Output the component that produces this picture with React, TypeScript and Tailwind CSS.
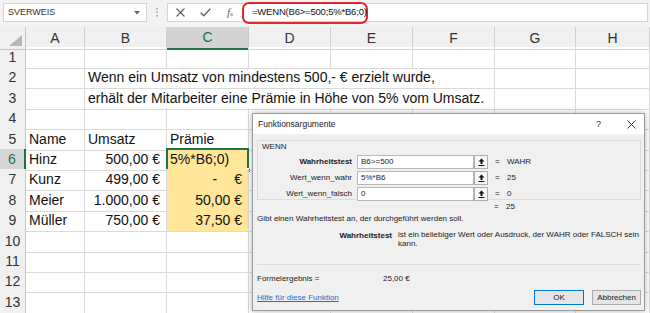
import type { ReactNode } from "react";

type Cell = {
  text?: ReactNode;
  right?: boolean;
  wide?: boolean;
  fill?: boolean;
  fillEnd?: boolean;
  active?: boolean;
};

const GRID = "grid grid-cols-[26px_59px_82px_82px_82px_82px_82px_81px_1fr]";
const LETTERS = ["A", "B", "C", "D", "E", "F", "G", "H"];

const blank = (n: number): Cell[] => Array.from({ length: n }, () => ({}));

const rows: Cell[][] = [
  blank(8),
  [{}, { text: "Wenn ein Umsatz von mindestens 500,- € erzielt wurde,", wide: true }, {}, {}],
  [{}, { text: "erhält der Mitarbeiter eine Prämie in Höhe von 5% vom Umsatz.", wide: true }, {}, {}],
  blank(8),
  [{ text: "Name" }, { text: "Umsatz" }, { text: "Prämie" }, ...blank(5)],
  [{ text: "Hinz" }, { text: "500,00 €", right: true }, { text: "5%*B6;0)", fill: true, active: true }, ...blank(5)],
  [
    { text: "Kunz" },
    { text: "499,00 €", right: true },
    {
      text: (
        <>
          <span>-</span>
          <span className="ml-[17px]">€</span>
        </>
      ),
      right: true,
      fill: true,
    },
    ...blank(5),
  ],
  [{ text: "Meier" }, { text: "1.000,00 €", right: true }, { text: "50,00 €", right: true, fill: true }, ...blank(5)],
  [{ text: "Müller" }, { text: "750,00 €", right: true }, { text: "37,50 €", right: true, fill: true, fillEnd: true }, ...blank(5)],
  blank(8),
  blank(8),
  blank(8),
  blank(8),
];

function UpButton() {
  return (
    <div className="w-[14px] h-[14px] border border-[#adadad] bg-[#f7f7f7] flex items-center justify-center">
      <svg width="7" height="8" viewBox="0 0 7 8">
        <path d="M3.5 0.5L0.5 3.5H2.5V6H4.5V3.5H6.5Z" fill="#111" />
        <rect x="0.5" y="7" width="6" height="1" fill="#111" />
      </svg>
    </div>
  );
}

function ArgRow(props: { label: string; bold?: boolean; value: string; result: string }) {
  return (
    <div className="flex items-center h-[14px]">
      <div className={"w-[99px] text-right pr-[5px] " + (props.bold ? "font-bold" : "")}>{props.label}</div>
      <div className="w-[117px] h-[14px] bg-white border border-[#b8b8b8] flex items-center px-[3px]">
        {props.value}
      </div>
      <UpButton />
      <div className="pl-[7px] w-[19px]">=</div>
      <div>{props.result}</div>
    </div>
  );
}

function Dialog() {
  return (
    <div className="absolute left-[252px] top-[113px] w-[393px] h-[198px] border border-[#9a9a9a] bg-[#f0f0f0] shadow-[0_0_6px_rgba(0,0,0,0.3)] text-[8px] leading-[10px] text-[#1a1a1a] flex flex-col">
      <div className="h-[20px] bg-white flex items-center pl-[5px] shrink-0">
        <span className="flex-1 text-[8.5px]">Funktionsargumente</span>
        <span className="w-[31px] text-[9px] text-[#333]">?</span>
        <svg className="mr-[8px]" width="9" height="9" viewBox="0 0 9 9">
          <path d="M0.5 0.5L8.5 8.5M8.5 0.5L0.5 8.5" stroke="#333" strokeWidth="1" />
        </svg>
      </div>
      <div className="flex flex-col pl-[4px] pr-[3px]">
        <div className="mt-[6px] h-[60px] border border-[#dcdcdc] flex flex-col">
          <div className="pl-[4px] pt-[1px]">WENN</div>
          <div className="mt-[3px] flex flex-col gap-[2px]">
            <ArgRow label="Wahrheitstest" bold value="B6>=500" result="WAHR" />
            <ArgRow label="Wert_wenn_wahr" value="5%*B6" result="25" />
            <ArgRow label="Wert_wenn_falsch" value="0" result="0" />
          </div>
        </div>
        <div className="flex items-center h-[14px]">
          <div className="w-[237px]" />
          <div className="w-[12px]">=</div>
          <div>25</div>
        </div>
        <div className="h-[10px]">Gibt einen Wahrheitstest an, der durchgeführt werden soll.</div>
        <div className="mt-[7px] flex">
          <div className="w-[135px] text-right font-bold">Wahrheitstest</div>
          <div className="pl-[6px] leading-[8.5px] whitespace-nowrap">
            ist ein beliebiger Wert oder Ausdruck, der WAHR oder FALSCH sein
            <br />
            kann.
          </div>
        </div>
        <div className="mt-[16px] h-px bg-[#dcdcdc]" />
        <div className="mt-[9px] flex h-[10px]">
          <div className="w-[126px]">Formelergebnis =</div>
          <div>25,00 €</div>
        </div>
        <div className="mt-[6px] flex items-center h-[15px]">
          <span className="flex-1 text-[#1a6fc9] underline">Hilfe für diese Funktion</span>
          <div className="w-[50px] h-[15px] border border-[#0078d7] bg-[#e5e5e5] flex items-center justify-center">
            OK
          </div>
          <div className="ml-[8px] w-[49px] h-[15px] border border-[#adadad] bg-[#e5e5e5] flex items-center justify-center">
            Abbrechen
          </div>
        </div>
      </div>
    </div>
  );
}

function CellView(props: { cell: Cell }) {
  const c = props.cell;
  let cls =
    "relative h-full flex items-center px-[3px] whitespace-nowrap border-r border-b ";
  cls += c.right ? "justify-end pr-[6px] " : "";
  cls += c.wide ? "col-span-5 " : "";
  if (c.fill) {
    cls += "bg-[#ffe699] border-r-[#dadada] ";
    cls += c.fillEnd ? "border-b-[#dadada] " : "border-b-[#ffe699] ";
  } else {
    cls += "border-[#dadada] ";
  }
  return (
    <div className={cls}>
      {c.text}
      {c.active && (
        <div className="absolute left-[-1px] top-[-1px] right-[-1px] bottom-[-1px] border-2 border-[#217346]">
          <div className="absolute right-[-4px] bottom-[-4px] w-[5px] h-[5px] bg-[#217346] border border-white" />
        </div>
      )}
    </div>
  );
}

export default function App() {
  return (
    <div className="relative w-[650px] h-[313px] overflow-hidden bg-white font-['Liberation_Sans',Arial,sans-serif] text-[#111]">
      <div className="h-[27px] bg-[#f3f3f3] flex items-start pt-[3px] pl-[3px] pr-[2px]">
        <div className="w-[144px] h-[19px] bg-white border border-[#d4d4d4] flex items-center pl-[4px] pr-[6px] text-[9px] text-[#333]">
          <span className="flex-1">SVERWEIS</span>
          <svg width="6" height="4" viewBox="0 0 6 4">
            <path d="M0 0H6L3 3.5Z" fill="#666" />
          </svg>
        </div>
        <div className="w-[20px] h-[19px] flex items-center justify-center">
          <svg width="2" height="9" viewBox="0 0 2 9">
            <rect x="0" y="0" width="2" height="1.5" fill="#b0b0b0" />
            <rect x="0" y="3.5" width="2" height="1.5" fill="#b0b0b0" />
            <rect x="0" y="7" width="2" height="1.5" fill="#b0b0b0" />
          </svg>
        </div>
        <div className="flex-1 h-[19px] bg-white border border-[#d4d4d4] flex items-center">
          <div className="w-[25px] flex justify-center">
            <svg width="9" height="9" viewBox="0 0 9 9">
              <path d="M0.5 0.5L8.5 8.5M8.5 0.5L0.5 8.5" stroke="#606060" strokeWidth="1.1" />
            </svg>
          </div>
          <div className="w-[25px] flex justify-center">
            <svg width="11" height="9" viewBox="0 0 11 9">
              <path d="M0.7 4.8L3.8 7.8L10.3 0.8" stroke="#606060" strokeWidth="1.3" fill="none" />
            </svg>
          </div>
          <div className="w-[24px] flex justify-center">
            <span className="font-['Liberation_Serif',serif] italic text-[11px] text-[#3c7a3c]">
              f<span className="text-[7px]">x</span>
            </span>
          </div>
          <div className="w-[126px] h-[22px] border-2 border-[#e3262b] rounded-[7px] flex items-center pl-[8px] text-[9.5px] tracking-[-0.2px] text-[#111]">
            =WENN(B6&gt;=500;5%*B6;0)
          </div>
        </div>
      </div>

      <div className={GRID + " h-[20px] bg-[#f0f0f0] text-[14px] text-[#333]"}>
        <div className="relative border-r border-b border-[#c6c6c6]">
          <svg className="absolute right-[3px] bottom-[3px]" width="13" height="11" viewBox="0 0 13 11">
            <path d="M13 0V11H0Z" fill="#b7b7b7" />
          </svg>
        </div>
        {LETTERS.map((l) =>
          l === "C" ? (
            <div
              key={l}
              className="flex items-center justify-center bg-[#d3d3d3] border-r border-[#c6c6c6] border-b-2 border-b-[#217346] text-[#217346]"
            >
              {l}
            </div>
          ) : (
            <div key={l} className="flex items-center justify-center border-r border-b border-[#d0d0d0]">
              {l}
            </div>
          )
        )}
      </div>

      {rows.map((cells, i) => {
        const n = i + 1;
        const active = n === 6;
        return (
          <div key={n} className={GRID + " h-[20.4px] text-[14px]"}>
            <div
              className={
                "flex items-center justify-center border-b border-[#d0d0d0] " +
                (active
                  ? "bg-[#d6d6d6] text-[#217346] border-r-2 border-r-[#217346]"
                  : "bg-[#f0f0f0] text-[#333] border-r border-r-[#c6c6c6]")
              }
            >
              {n}
            </div>
            {cells.map((c, j) => (
              <CellView key={j} cell={c} />
            ))}
          </div>
        );
      })}

      <Dialog />
    </div>
  );
}
